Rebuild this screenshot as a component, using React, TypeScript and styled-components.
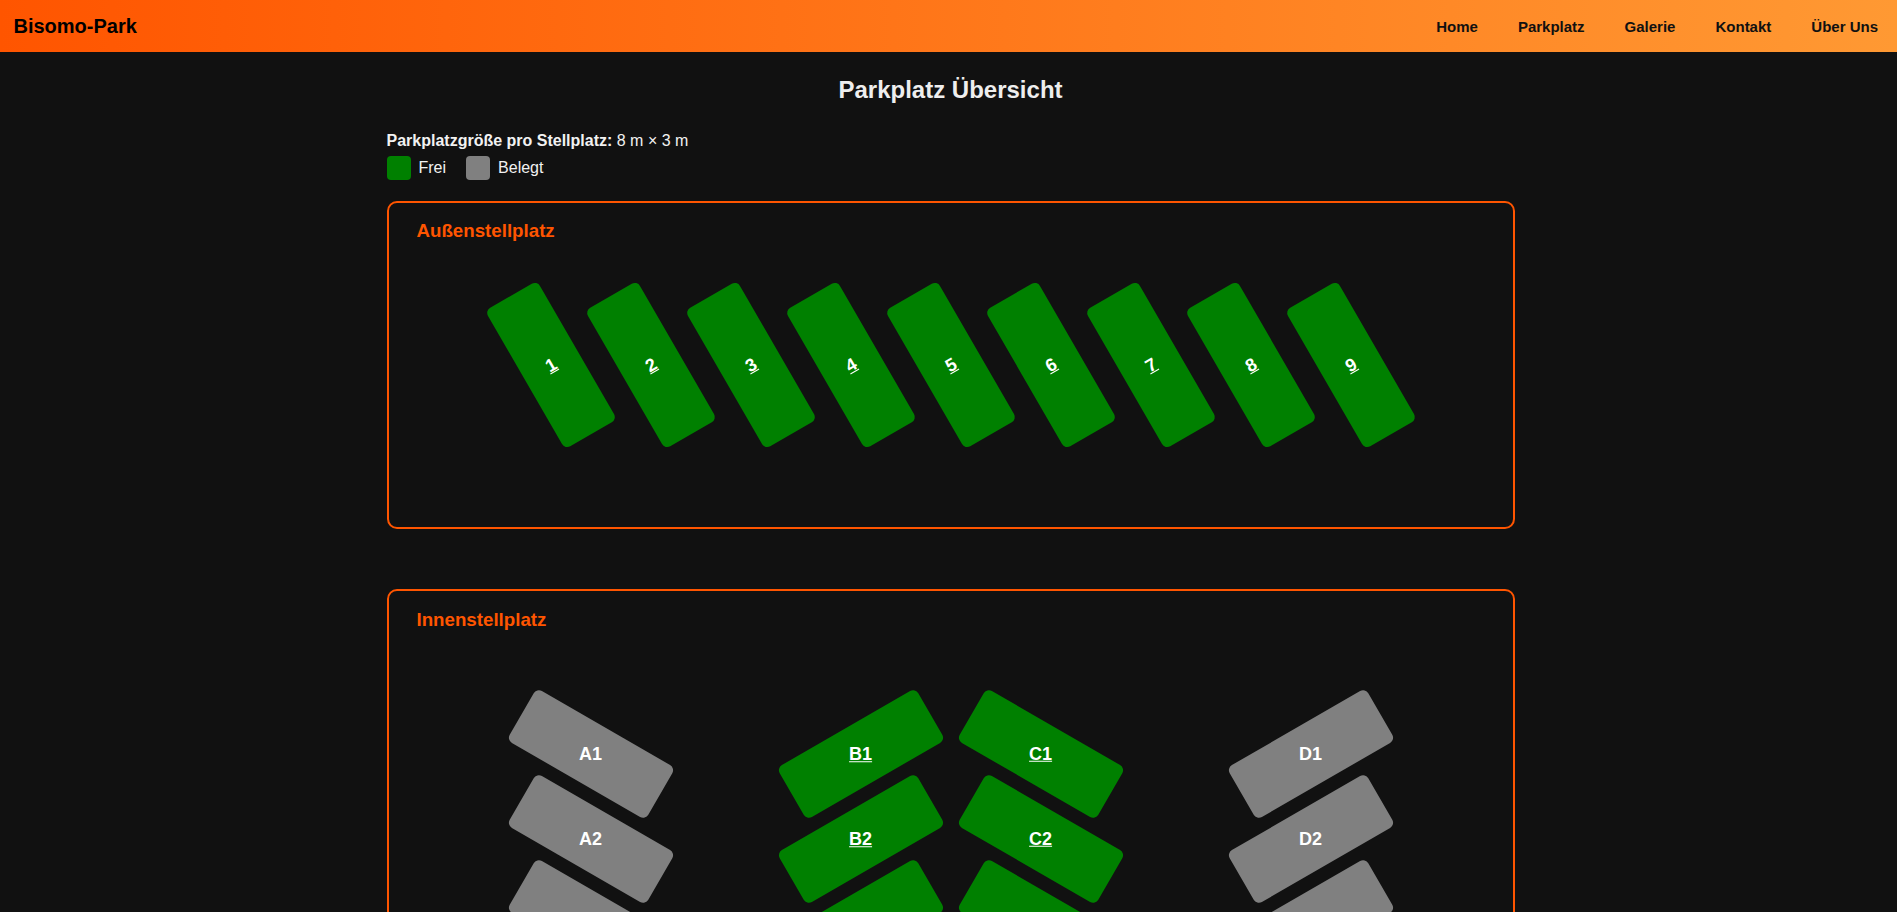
import React from "react";
import styled, { createGlobalStyle } from "styled-components";

const GlobalStyle = createGlobalStyle`
  html, body {
    margin: 0;
    padding: 0;
    background: #111111;
  }
  body {
    font-family: "Liberation Sans", Arial, Helvetica, sans-serif;
    color: #eeeeee;
  }
  * { box-sizing: border-box; }
`;

const Header = styled.header`
  height: 52px;
  display: flex;
  align-items: center;
  justify-content: space-between;
  padding: 0 19px 0 13.5px;
  background: linear-gradient(90deg, #ff5500 0%, #ff9933 100%);
`;

const Logo = styled.div`
  font-size: 20px;
  font-weight: 700;
  color: #000;
`;

const Nav = styled.nav`
  display: flex;
  gap: 40px;
`;

const NavLink = styled.a`
  font-size: 15px;
  font-weight: 700;
  color: #111;
  text-decoration: none;
`;

const Page = styled.div`
  padding-left: 4px;
`;

const Main = styled.main`
  width: 1128px;
  margin: 0 auto;
  padding-top: 23.6px;
  padding-bottom: 40px;
`;

const Title = styled.h2`
  margin: 0;
  text-align: center;
  font-size: 24px;
  font-weight: 700;
  line-height: normal;
  color: #eeeeee;
`;

const Info = styled.p`
  margin: 28.8px 0 0;
  font-size: 16px;
  line-height: normal;
  color: #f2f2f2;
`;

const Legend = styled.div`
  display: flex;
  gap: 20px;
  margin-top: 5.6px;
`;

const LegendItem = styled.div`
  display: flex;
  align-items: center;
  font-size: 16px;
  color: #f2f2f2;
`;

const Swatch = styled.span<{ $free: boolean }>`
  width: 24px;
  height: 24px;
  border-radius: 4px;
  margin-right: 8px;
  background: ${(p) => (p.$free ? "#008000" : "#808080")};
`;

const Sections = styled.div`
  display: flex;
  flex-direction: column;
  gap: 60px;
  margin-top: 21px;
`;

const Section = styled.section`
  border: 2px solid #ff5500;
  border-radius: 10px;
  padding: 17.5px 28px 0;
`;

const SectionTitle = styled.h3`
  margin: 0;
  font-size: 18.72px;
  font-weight: 700;
  line-height: normal;
  color: #ff5500;
`;

const OuterRow = styled.div`
  display: flex;
  justify-content: center;
  gap: 40px;
  padding: 43px 0 82px;
`;

const InnerRow = styled.div`
  display: flex;
  justify-content: center;
  gap: 110px;
  padding: 93px 0 80px;
`;

const Pair = styled.div`
  display: flex;
  gap: 20px;
`;

const Column = styled.div`
  display: flex;
  flex-direction: column;
  gap: 25px;
`;

const Spot = styled.div<{ $free: boolean; $w: number; $h: number; $angle: number }>`
  flex-shrink: 0;
  width: ${(p) => p.$w}px;
  height: ${(p) => p.$h}px;
  border-radius: 6px;
  background: ${(p) => (p.$free ? "#008000" : "#808080")};
  transform: rotate(${(p) => p.$angle}deg);
  display: flex;
  align-items: center;
  justify-content: center;
`;

const FreeLabel = styled.a<{ $size: number; $counter: number }>`
  color: #ffffff;
  font-weight: 700;
  font-size: ${(p) => p.$size}px;
  line-height: 1;
  text-decoration: underline;
  transform: rotate(${(p) => p.$counter}deg);
`;

const TakenLabel = styled.span<{ $size: number; $counter: number }>`
  color: #ffffff;
  font-weight: 700;
  font-size: ${(p) => p.$size}px;
  line-height: 1;
  transform: rotate(${(p) => p.$counter}deg);
`;

type SpotData = { id: string; free: boolean };

const outerSpots: SpotData[] = Array.from({ length: 9 }, (_, i) => ({
  id: String(i + 1),
  free: true,
}));

const makeColumn = (letter: string, free: boolean): SpotData[] =>
  Array.from({ length: 4 }, (_, i) => ({ id: `${letter}${i + 1}`, free }));

const colA = makeColumn("A", false);
const colB = makeColumn("B", true);
const colC = makeColumn("C", true);
const colD = makeColumn("D", false);

const Label: React.FC<{ spot: SpotData; size: number; counter: number }> = ({
  spot,
  size,
  counter,
}) =>
  spot.free ? (
    <FreeLabel href="#" $size={size} $counter={counter}>
      {spot.id}
    </FreeLabel>
  ) : (
    <TakenLabel $size={size} $counter={counter}>
      {spot.id}
    </TakenLabel>
  );

const InnerColumn: React.FC<{ spots: SpotData[]; angle: number }> = ({ spots, angle }) => (
  <Column>
    {spots.map((s) => (
      <Spot key={s.id} $free={s.free} $w={160} $h={60} $angle={angle}>
        <Label spot={s} size={18} counter={-angle} />
      </Spot>
    ))}
  </Column>
);

export default function App() {
  return (
    <>
      <GlobalStyle />
      <Header>
        <Logo>Bisomo-Park</Logo>
        <Nav>
          <NavLink href="#">Home</NavLink>
          <NavLink href="#">Parkplatz</NavLink>
          <NavLink href="#">Galerie</NavLink>
          <NavLink href="#">Kontakt</NavLink>
          <NavLink href="#">Über Uns</NavLink>
        </Nav>
      </Header>
      <Page>
        <Main>
          <Title>Parkplatz Übersicht</Title>
          <Info>
            <strong>Parkplatzgröße pro Stellplatz:</strong> 8 m × 3 m
          </Info>
          <Legend>
            <LegendItem>
              <Swatch $free />
              Frei
            </LegendItem>
            <LegendItem>
              <Swatch $free={false} />
              Belegt
            </LegendItem>
          </Legend>
          <Sections>
            <Section>
              <SectionTitle>Außenstellplatz</SectionTitle>
              <OuterRow>
                {outerSpots.map((s) => (
                  <Spot key={s.id} $free={s.free} $w={60} $h={160} $angle={-30}>
                    <Label spot={s} size={18} counter={0} />
                  </Spot>
                ))}
              </OuterRow>
            </Section>
            <Section>
              <SectionTitle>Innenstellplatz</SectionTitle>
              <InnerRow>
                <InnerColumn spots={colA} angle={30} />
                <Pair>
                  <InnerColumn spots={colB} angle={-30} />
                  <InnerColumn spots={colC} angle={30} />
                </Pair>
                <InnerColumn spots={colD} angle={-30} />
              </InnerRow>
            </Section>
          </Sections>
        </Main>
      </Page>
    </>
  );
}
